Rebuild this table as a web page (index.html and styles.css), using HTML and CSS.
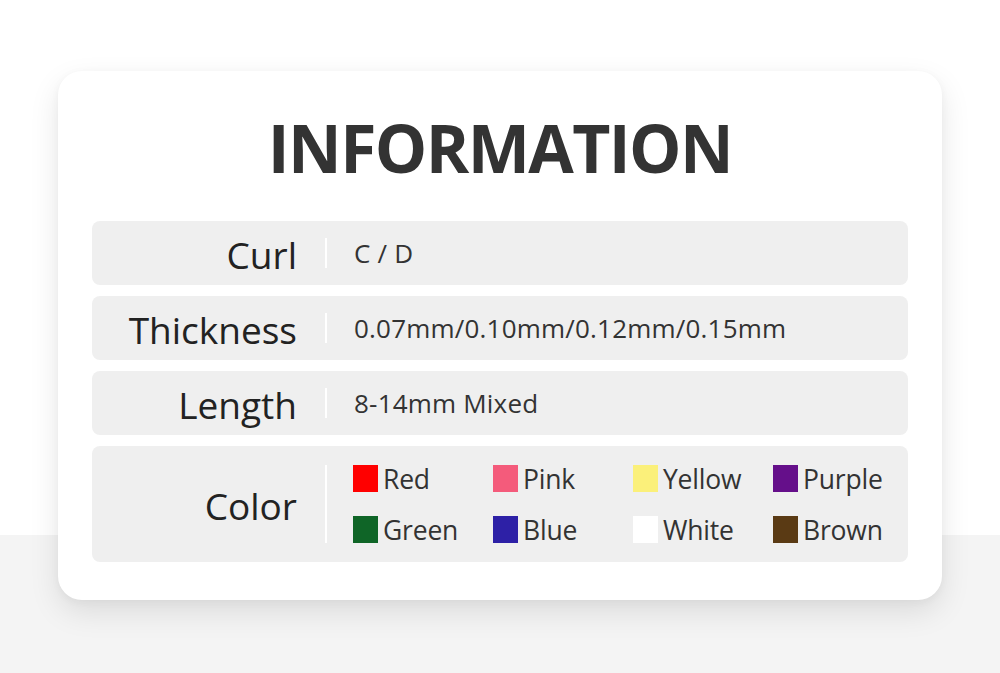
FILE: index.html
```html
<!DOCTYPE html>
<html>
<head>
<meta charset="utf-8">
<link rel="stylesheet" href="styles.css">
</head>
<body>
<div class="page">
  <div class="card">
    <h1 class="title">INFORMATION</h1>
    <div class="rows">
      <div class="row">
        <div class="label">Curl</div>
        <div class="divider"></div>
        <div class="value">C / D</div>
      </div>
      <div class="row">
        <div class="label">Thickness</div>
        <div class="divider"></div>
        <div class="value">0.07mm/0.10mm/0.12mm/0.15mm</div>
      </div>
      <div class="row">
        <div class="label">Length</div>
        <div class="divider"></div>
        <div class="value">8-14mm Mixed</div>
      </div>
      <div class="row row-color">
        <div class="label">Color</div>
        <div class="divider divider-tall"></div>
        <div class="colors">
          <div class="chip"><span class="sw sw-red"></span>Red</div>
          <div class="chip"><span class="sw sw-pink"></span>Pink</div>
          <div class="chip"><span class="sw sw-yellow"></span>Yellow</div>
          <div class="chip"><span class="sw sw-purple"></span>Purple</div>
          <div class="chip"><span class="sw sw-green"></span>Green</div>
          <div class="chip"><span class="sw sw-blue"></span>Blue</div>
          <div class="chip"><span class="sw sw-white"></span>White</div>
          <div class="chip"><span class="sw sw-brown"></span>Brown</div>
        </div>
      </div>
    </div>
  </div>
</div>
</body>
</html>
```
FILE: styles.css
```css
html, body {
  margin: 0;
  padding: 0;
}
body {
  width: 1000px;
  height: 673px;
  overflow: hidden;
  font-family: "Open Sans", "Liberation Sans", sans-serif;
  background: linear-gradient(#ffffff 0, #ffffff 535px, #f4f4f4 535px, #f4f4f4 100%);
}
.page {
  padding-top: 71px;
  padding-left: 58px;
}
.card {
  width: 884px;
  height: 529px;
  box-sizing: border-box;
  background: #ffffff;
  border-radius: 24px;
  box-shadow: 0 12px 30px rgba(0, 0, 0, 0.10), 0 2px 8px rgba(0, 0, 0, 0.04);
  padding: 0 34px;
}
.title {
  margin: 0;
  height: 150px;
  display: flex;
  align-items: center;
  justify-content: center;
  padding-top: 2px;
  box-sizing: border-box;
  font-size: 66px;
  font-weight: 700;
  letter-spacing: -1.6px;
  color: #333333;
}
.rows {
  display: flex;
  flex-direction: column;
  gap: 11px;
}
.row {
  display: flex;
  align-items: center;
  height: 64px;
  background: #efefef;
  border-radius: 8px;
}
.label {
  flex: none;
  width: 205px;
  text-align: right;
  font-size: 37px;
  color: #222222;
  letter-spacing: 0;
  padding-top: 2px;
}
.divider {
  flex: none;
  width: 2px;
  height: 30px;
  background: #ffffff;
  margin-left: 28px;
  margin-right: 27px;
}
.value {
  font-size: 26px;
  color: #333333;
  letter-spacing: 0.2px;
}
.row-color {
  height: 116px;
}
.divider-tall {
  height: 78px;
}
.colors {
  flex: none;
  display: grid;
  grid-template-columns: repeat(4, 140px);
  row-gap: 24px;
  margin-left: -1px;
}
.chip {
  display: flex;
  align-items: center;
  gap: 5px;
  font-size: 26.5px;
  color: #333333;
  letter-spacing: -0.2px;
  height: 27px;
}
.sw {
  width: 25px;
  height: 27px;
  flex: none;
}
.sw-red { background: #ff0000; }
.sw-pink { background: #f45b7b; }
.sw-yellow { background: #fbf07a; }
.sw-purple { background: #650f8a; }
.sw-green { background: #0f6527; }
.sw-blue { background: #2d20a6; }
.sw-white { background: #ffffff; }
.sw-brown { background: #5a3a14; }
```
